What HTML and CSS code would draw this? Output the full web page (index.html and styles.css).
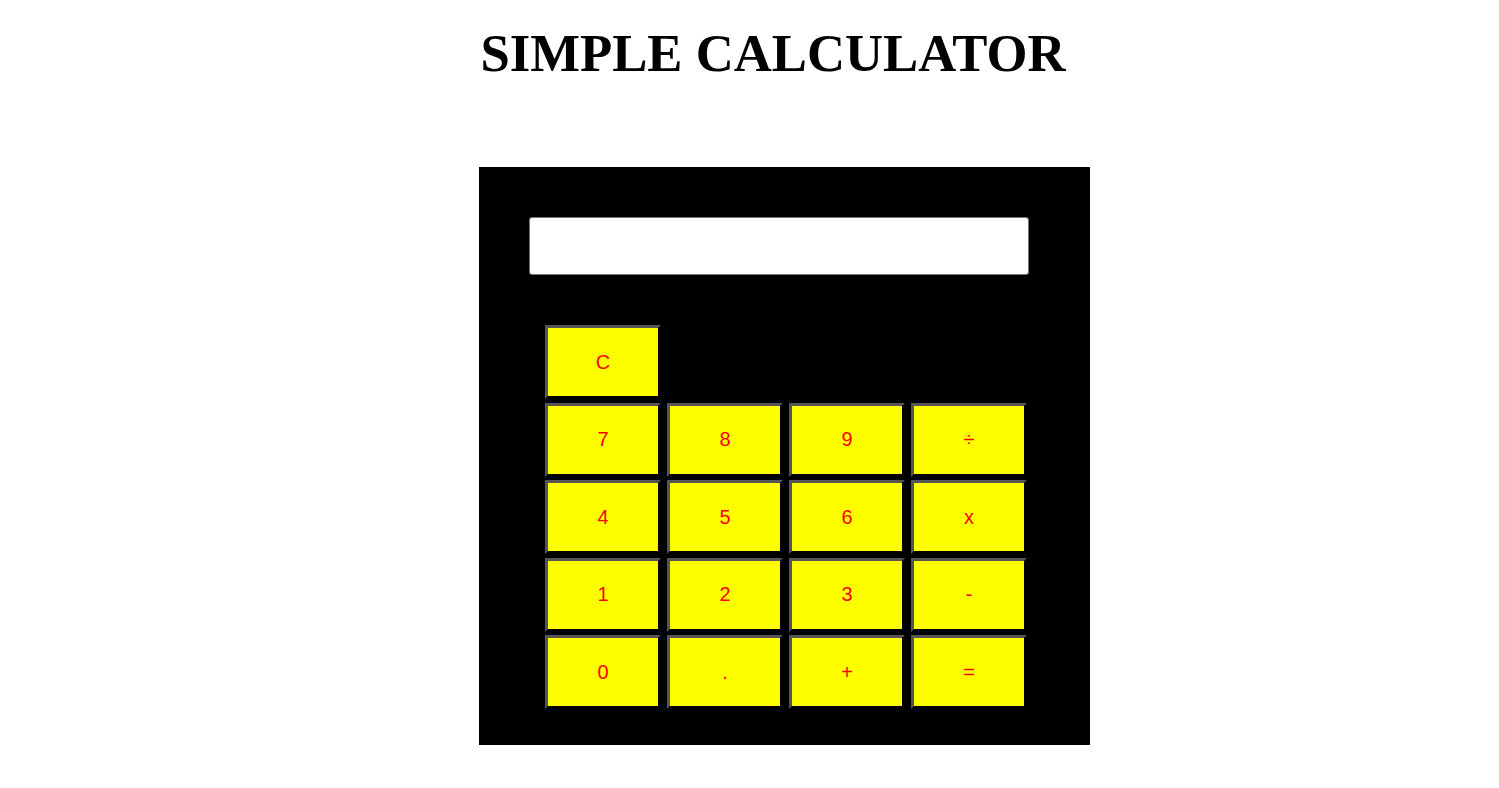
FILE: index.html
```html
<!DOCTYPE html>
<html>
<head>
<meta charset="utf-8">
<title>Simple Calculator</title>
<link rel="stylesheet" href="styles.css">
</head>
<body>
<h1 class="title">SIMPLE CALCULATOR</h1>
<div class="calc">
  <input class="display" type="text">
  <div class="keys">
    <button class="key">C</button>
    <span class="blank"></span><span class="blank"></span><span class="blank"></span>
    <button class="key">7</button>
    <button class="key">8</button>
    <button class="key">9</button>
    <button class="key">÷</button>
    <button class="key">4</button>
    <button class="key">5</button>
    <button class="key">6</button>
    <button class="key">x</button>
    <button class="key">1</button>
    <button class="key">2</button>
    <button class="key">3</button>
    <button class="key">-</button>
    <button class="key">0</button>
    <button class="key">.</button>
    <button class="key">+</button>
    <button class="key">=</button>
  </div>
</div>
</body>
</html>
```

FILE: styles.css
```css
body {
  margin: 0;
  background: #fff;
}
.title {
  margin: 24px 0 0;
  padding-left: 47px;
  text-align: center;
  font-family: "Liberation Serif", "Times New Roman", serif;
  font-weight: bold;
  font-size: 52.7px;
  line-height: 58px;
  color: #000;
}
.calc {
  box-sizing: border-box;
  width: 611px;
  height: 578px;
  margin: 85px 0 0 479px;
  padding: 50px 0 0 50px;
  background: #000;
}
.display {
  display: block;
  box-sizing: border-box;
  width: 500px;
  height: 58px;
  margin: 0;
  padding: 0;
  border: 1px solid #767676;
  border-radius: 3px;
  background: #fff;
}
.keys {
  display: grid;
  grid-template-columns: repeat(4, 116px);
  grid-auto-rows: 74px;
  column-gap: 6px;
  row-gap: 3.5px;
  margin: 50px 0 0 16px;
}
.key {
  box-sizing: border-box;
  margin: 0;
  padding: 0;
  background: #ffff00;
  color: #ff0000;
  font-family: "Liberation Sans", Arial, sans-serif;
  font-size: 20px;
  border-width: 3px;
  border-style: solid;
  border-color: #555 #000 #000 #555;
}
```
